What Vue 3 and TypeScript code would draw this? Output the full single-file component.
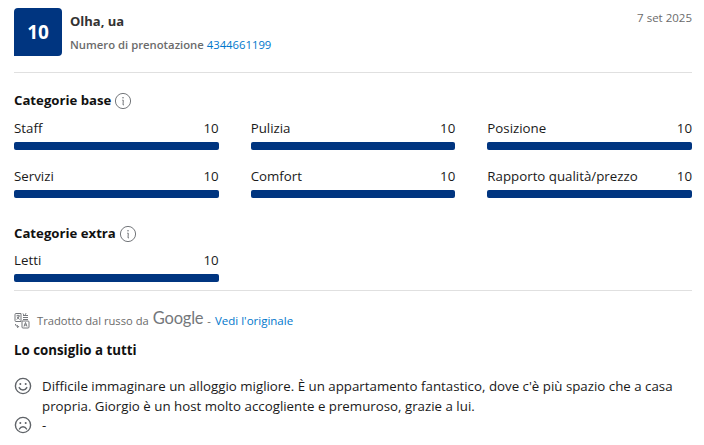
<template>
  <div class="review">
    <header class="review__head">
      <div class="review__score">10</div>
      <div class="review__who">
        <div class="review__name">Olha, ua</div>
        <div class="review__booking">
          <strong>Numero di prenotazione</strong> <a>4344661199</a>
        </div>
      </div>
      <div class="review__date">7 set 2025</div>
    </header>

    <section v-for="group in groups" :key="group.title" class="cat" :class="group.cls">
      <h3 class="cat__title">
        {{ group.title }}
        <svg class="cat__info" width="18" height="18" viewBox="0 0 18 18" fill="none">
          <circle cx="9" cy="9" r="7.6" stroke="#74777b" stroke-width="1" />
          <path d="M8.2 8.2h1.1l-.3 4.6h1" stroke="#74777b" stroke-width="1" />
          <circle cx="9" cy="5.8" r=".8" fill="#74777b" />
        </svg>
      </h3>
      <div class="cat__grid">
        <div v-for="item in group.items" :key="item" class="cat__item">
          <div class="cat__row"><span>{{ item }}</span><span>10</span></div>
          <div class="cat__bar"></div>
        </div>
      </div>
    </section>

    <div class="translated">
      <svg class="translated__icon" width="16" height="17" viewBox="0 0 16 17" fill="none" stroke="#74777b" stroke-width="1">
        <path d="M7 9.5H2a1 1 0 0 1-1-1v-6a1 1 0 0 1 1-1h5z" />
        <path d="M2.5 3.8h3.2M4 2.8v1M5.2 3.8c-.3 1.6-1.2 2.8-2.6 3.6M3.3 5c.5 1 1.2 1.8 2.3 2.4" />
        <path d="M9 1.5l.8 1.4M12 1.2l-.7 1.6M9 3.5h5M9 5.5h5M9 7.5h5" />
        <path d="M8 9v6a1 1 0 0 0 1 1h5a1 1 0 0 0 1-1V10a1 1 0 0 0-1-1z" />
        <path d="M10 14.5l1.5-4 1.5 4M10.6 13h1.8" />
        <path d="M1.5 12c0 1.6 1 2.6 3 2.6M3.2 13.2l1.4 1.4-1.4 1.4" />
      </svg>
      <span>Tradotto dal russo da</span>
      <span class="translated__google">Google</span>
      <span>-</span>
      <a>Vedi l'originale</a>
    </div>

    <h4 class="review__title">Lo consiglio a tutti</h4>

    <div class="line">
      <svg class="line__face" width="18" height="18" viewBox="0 0 18 18" fill="none" stroke="#5f6368" stroke-width="1.4">
        <circle cx="9" cy="9" r="7.6" />
        <path d="M5.2 10.6c.8 1.6 2.2 2.4 3.8 2.4s3-.8 3.8-2.4" stroke-linecap="round" />
        <circle cx="6.3" cy="6.9" r="1" fill="#5f6368" stroke="none" />
        <circle cx="11.7" cy="6.9" r="1" fill="#5f6368" stroke="none" />
      </svg>
      <p>Difficile immaginare un alloggio migliore. È un appartamento fantastico, dove c'è più spazio che a casa propria. Giorgio è un host molto accogliente e premuroso, grazie a lui.</p>
    </div>
    <div class="line line--neg">
      <svg class="line__face" width="18" height="18" viewBox="0 0 18 18" fill="none" stroke="#5f6368" stroke-width="1.4">
        <circle cx="9" cy="9" r="7.6" />
        <path d="M5.4 13c.8-1.5 2.1-2.2 3.6-2.2s2.8.7 3.6 2.2" stroke-linecap="round" />
        <circle cx="6.3" cy="6.9" r="1" fill="#5f6368" stroke="none" />
        <circle cx="11.7" cy="6.9" r="1" fill="#5f6368" stroke="none" />
      </svg>
      <p>-</p>
    </div>
  </div>
</template>

<script setup lang="ts">
const groups = [
  {
    title: 'Categorie base',
    cls: 'cat--base',
    items: ['Staff', 'Pulizia', 'Posizione', 'Servizi', 'Comfort', 'Rapporto qualità/prezzo']
  },
  { title: 'Categorie extra', cls: 'cat--extra', items: ['Letti'] }
]
</script>

<style>
html,
body {
  background: #fff;
}
</style>

<style scoped>
.review {
  width: 704px;
  height: 445px;
  overflow: hidden;
  box-sizing: border-box;
  padding: 8px 12px 0 14px;
  font-family: "Open Sans", "Noto Sans", sans-serif;
  font-size: 13.3px;
  line-height: 19px;
  color: #1a1a1a;
  background: #fff;
}
.review__head {
  display: flex;
  gap: 8px;
  height: 65px;
  box-sizing: border-box;
  border-bottom: 1px solid #e0e0e0;
}
.review__score {
  width: 48px;
  height: 48px;
  display: flex;
  align-items: center;
  justify-content: center;
  background: #003580;
  color: #fff;
  font-size: 19px;
  font-weight: 700;
  border-radius: 4px 4px 4px 0;
}
.review__who {
  flex: 1;
}
.review__name {
  font-weight: 700;
  font-size: 13px;
  color: #333;
  margin-top: 4px;
}
.review__booking {
  margin-top: 4px;
  font-size: 11.3px;
  color: #6b6b6b;
}
.review__booking strong {
  font-weight: 600;
}
.review__booking a,
.translated a {
  color: #0077cc;
}
.review__date {
  font-size: 11.5px;
  color: #6b6b6b;
}
.cat--base {
  padding-top: 18px;
}
.cat--extra {
  margin-top: 26px;
  padding-bottom: 8px;
  border-bottom: 1px solid #e0e0e0;
}
.cat--extra .cat__grid {
  margin-top: 8px;
}
.cat__title {
  display: flex;
  align-items: center;
  gap: 3px;
  margin: 0;
  font-size: 13.2px;
  line-height: 19px;
  font-weight: 700;
  color: #111;
}
.cat__grid {
  display: grid;
  grid-template-columns: repeat(3, 1fr);
  gap: 17px 32px;
  margin-top: 9px;
}
.cat__row {
  display: flex;
  justify-content: space-between;
  height: 23px;
  line-height: 19px;
}
.cat__bar {
  height: 8px;
  background: #003580;
  border-radius: 2px;
}
.translated {
  display: flex;
  align-items: center;
  gap: 4px;
  margin-top: 20px;
  height: 18px;
  font-size: 11.2px;
  color: #6b6b6b;
}
.translated a {
  font-size: 11.5px;
}
.translated__icon {
  margin-right: 3px;
}
.translated__google {
  font-family: Lato, sans-serif;
  font-size: 16.5px;
  letter-spacing: -0.2px;
  color: #74777b;
  margin-bottom: 3px;
}
.review__title {
  margin: 12px 0 16px;
  font-size: 13.3px;
  line-height: 19px;
  font-weight: 700;
  color: #111;
}
.line {
  display: flex;
  gap: 10px;
}
.line--neg {
  margin-top: -1px;
}
.line p {
  margin: 0;
  line-height: 20px;
}
.line__face {
  flex: none;
  margin-top: 1px;
}
</style>
